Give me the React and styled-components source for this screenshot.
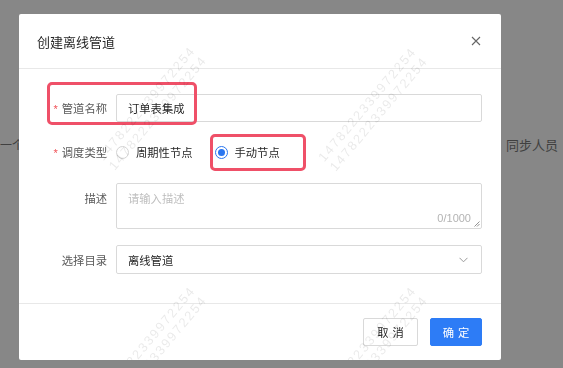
import React from "react";
import styled, { createGlobalStyle } from "styled-components";

const GlobalStyle = createGlobalStyle`
	html, body {
		margin: 0;
		padding: 0;
		width: 563px;
		height: 368px;
		overflow: hidden;
		font-family: "Noto Sans CJK SC", "Noto Sans", sans-serif;
	}
	* {
		box-sizing: border-box;
	}
`;

const WATERMARKS = [
	{ x: 133, y: 94 },
	{ x: 354, y: 95 },
	{ x: 133, y: 334 },
	{ x: 354, y: 334 },
];

function App() {
	return (
		<>
			<GlobalStyle />
			<Page>
				<PageLine>
					<span>一个重</span>
					<RightText>同步人员</RightText>
				</PageLine>
			</Page>
			<Backdrop />
			<Modal>
				{WATERMARKS.map((w, i) => (
					<Watermark key={i} style={{ left: w.x, top: w.y }}>
						<div>1478222339972254</div>
						<div>1478222339972254</div>
					</Watermark>
				))}
				<Header>
					<Title>创建离线管道</Title>
					<Close>
						<svg width="10" height="10" viewBox="0 0 10 10">
							<path d="M1 1 L9 9 M9 1 L1 9" stroke="#666" strokeWidth="1.1" fill="none" />
						</svg>
					</Close>
				</Header>
				<Body>
					<Row $h={28}>
						<Label $required>管道名称</Label>
						<Input>订单表集成</Input>
						<Highlight style={{ left: 28, top: -12, width: 150, height: 43 }} />
					</Row>
					<Row $h={28} $gap={17}>
						<Label $required>调度类型</Label>
						<RadioGroup>
							<RadioOption>
								<RadioDot />
								周期性节点
							</RadioOption>
							<RadioOption>
								<RadioDot $checked />
								手动节点
							</RadioOption>
						</RadioGroup>
						<Highlight style={{ left: 191, top: -4, width: 96, height: 37 }} />
					</Row>
					<Row $h={46} $align="flex-start">
						<Label $top>描述</Label>
						<TextArea>
							<Placeholder>请输入描述</Placeholder>
							<Count>0/1000</Count>
							<Resize>
								<svg width="6" height="6" viewBox="0 0 6 6">
									<path d="M0.5 5.5 L5.5 0.5 M3 5.5 L5.5 3" stroke="#777" strokeWidth="0.8" fill="none" />
								</svg>
							</Resize>
						</TextArea>
					</Row>
					<Row $h={29} $gap={0}>
						<Label>选择目录</Label>
						<Select>
							<span>离线管道</span>
							<svg width="9" height="6" viewBox="0 0 9 6">
								<path d="M0.5 0.8 L4.5 4.8 L8.5 0.8" stroke="#999" strokeWidth="1" fill="none" />
							</svg>
						</Select>
					</Row>
				</Body>
				<Footer>
					<Button>取消</Button>
					<Button $primary>确定</Button>
				</Footer>
			</Modal>
		</>
	);
}

export default App;

const Page = styled.div`
	width: 563px;
	height: 368px;
	background: #ffffff;
	padding-top: 136px;
	overflow: hidden;
`;

const PageLine = styled.div`
	display: flex;
	justify-content: space-between;
	font-size: 12px;
	color: #7a7a7a;
`;

const RightText = styled.span`
	margin-right: 5px;
	font-size: 13px;
	margin-top: -1px;
`;

const Backdrop = styled.div`
	position: fixed;
	inset: 0;
	background: rgba(0, 0, 0, 0.47);
`;

const Modal = styled.div`
	position: fixed;
	left: 19px;
	top: 14px;
	width: 482px;
	height: 346px;
	background: #ffffff;
	border-radius: 2px;
	overflow: hidden;
	display: flex;
	flex-direction: column;
`;

const Watermark = styled.div`
	position: absolute;
	transform: translate(-50%, -50%) rotate(-50deg);
	font-family: "Liberation Sans", sans-serif;
	font-size: 13px;
	letter-spacing: 1.8px;
	line-height: 15px;
	color: rgba(0, 0, 0, 0.085);
	white-space: nowrap;
	pointer-events: none;
	z-index: 5;
`;

const Header = styled.div`
	height: 55px;
	border-bottom: 1px solid #e8e8e8;
	display: flex;
	align-items: center;
	justify-content: space-between;
	padding: 0 20px 0 18px;
`;

const Title = styled.div`
	font-size: 13px;
	color: #262626;
`;

const Close = styled.div`
	display: flex;
	align-items: center;
`;

const Body = styled.div`
	height: 234px;
	padding: 25px 19px 0 0;
	display: flex;
	flex-direction: column;
`;

const Row = styled.div`
	position: relative;
	height: ${(p) => p.$h}px;
	margin-bottom: ${(p) => (p.$gap === undefined ? 16 : p.$gap)}px;
	display: flex;
	align-items: ${(p) => p.$align || "center"};
	gap: 9px;
`;

const Label = styled.div`
	width: 88px;
	flex-shrink: 0;
	text-align: right;
	font-size: 11.3px;
	color: #595959;
	padding-top: ${(p) => (p.$top ? 7 : 0)}px;

	&::before {
		content: ${(p) => (p.$required ? '"*"' : '""')};
		color: #f04f55;
		margin-right: 4px;
		font-family: "Liberation Sans", sans-serif;
		font-size: 11px;
	}
`;

const Field = styled.div`
	flex: 1;
	height: 100%;
	border: 1px solid #d9d9d9;
	border-radius: 2px;
	font-size: 11.3px;
	color: #262626;
	padding: 0 11px;
	display: flex;
	align-items: center;
`;

const Input = styled(Field)``;

const Select = styled(Field)`
	justify-content: space-between;
	padding-right: 13px;
`;

const TextArea = styled(Field)`
	position: relative;
	align-items: flex-start;
	padding-top: 6px;
`;

const Placeholder = styled.span`
	color: #bfbfbf;
`;

const Count = styled.span`
	position: absolute;
	right: 10px;
	bottom: 4px;
	font-family: "Liberation Sans", sans-serif;
	font-size: 11px;
	color: #b3b3b3;
`;

const Resize = styled.span`
	position: absolute;
	right: 1px;
	bottom: 1px;
	display: flex;
`;

const RadioGroup = styled.div`
	display: flex;
	align-items: center;
	gap: 22px;
`;

const RadioOption = styled.label`
	display: flex;
	align-items: center;
	gap: 7px;
	font-size: 11.3px;
	color: #262626;
`;

const RadioDot = styled.span`
	width: 13px;
	height: 13px;
	border-radius: 50%;
	border: 1px solid ${(p) => (p.$checked ? "#2a76f0" : "#d4d4d4")};
	display: flex;
	align-items: center;
	justify-content: center;

	&::after {
		content: "";
		width: 7px;
		height: 7px;
		border-radius: 50%;
		background: ${(p) => (p.$checked ? "#2a76f0" : "transparent")};
	}
`;

const Highlight = styled.div`
	position: absolute;
	border: 3px solid #ef5068;
	border-radius: 5px;
	pointer-events: none;
`;

const Footer = styled.div`
	flex: 1;
	border-top: 1px solid #e8e8e8;
	display: flex;
	justify-content: flex-end;
	align-items: flex-start;
	gap: 12px;
	padding: 14px 19px 0 0;
`;

const Button = styled.button`
	height: 28px;
	width: ${(p) => (p.$primary ? 52 : 55)}px;
	border-radius: 2px;
	border: 1px solid ${(p) => (p.$primary ? "#2d7cf6" : "#d9d9d9")};
	background: ${(p) => (p.$primary ? "#2d7cf6" : "#ffffff")};
	color: ${(p) => (p.$primary ? "#ffffff" : "#262626")};
	font-family: "Noto Sans CJK SC", sans-serif;
	font-size: 11.3px;
	letter-spacing: 4px;
	padding: 0 0 0 4px;
	display: flex;
	align-items: center;
	justify-content: center;
`;
